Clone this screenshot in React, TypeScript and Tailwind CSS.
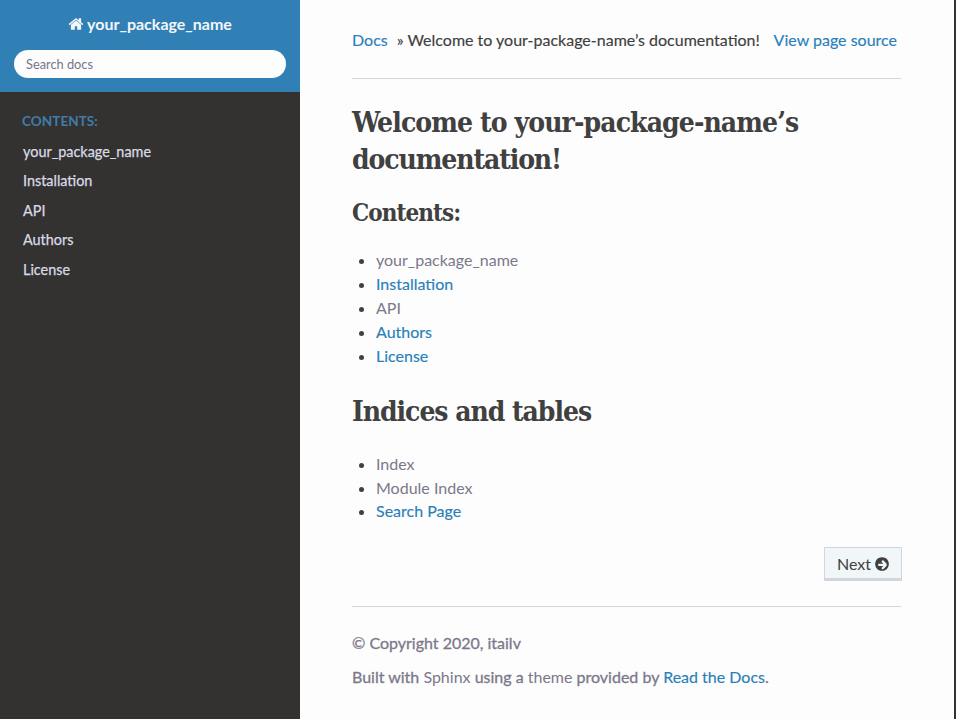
import type { ReactNode } from "react";

const LINK = "text-[#2980b9] [-webkit-text-stroke:0.15px]";
const VISITED = "text-[#7b788a] [-webkit-text-stroke:0px]";
const SLAB = "font-['Roboto_Slab','DejaVu_Serif_Condensed','DejaVu_Serif',serif] font-bold whitespace-nowrap ";

function HomeIcon() {
  return (
    <svg viewBox="0 0 1792 1792" className="h-4 w-4 fill-current" aria-hidden="true">
      <path d="M1472 992v480q0 26-19 45t-45 19h-384v-384h-256v384h-384q-26 0-45-19t-19-45v-480q0-1 .5-3t.5-3l575-474 575 474q1 2 1 6zm223-69l-62 74q-8 9-21 11h-3q-13 0-21-7l-692-577-692 577q-12 8-24 7-13-2-21-11l-62-74q-8-10-7-23.5t11-21.5l719-599q32-26 76-26t76 26l244 204v-195q0-14 9-23t23-9h192q14 0 23 9t9 23v408l219 182q10 8 11 21.5t-7 23.5z" />
    </svg>
  );
}

function ArrowCircleIcon() {
  return (
    <svg viewBox="0 0 1792 1792" className="h-4 w-4 fill-current" aria-hidden="true">
      <path d="M1413 896q0-27-18-45l-362-362q-18-18-45-18t-45 18l-91 91q-18 18-18 45t18 45l189 189h-502q-26 0-45 19t-19 45v128q0 26 19 45t45 19h502l-189 189q-19 19-19 45t19 45l91 91q18 18 45 18t45-18l362-362q18-18 18-45zm251 0q0 209-103 385.5t-279.5 279.5-385.5 103-385.5-103-279.5-279.5-103-385.5 103-385.5 279.5-279.5 385.5-103 385.5 103 279.5 279.5 103 385.5z" />
    </svg>
  );
}

function Item({ children, className }: { children: ReactNode; className: string }) {
  return (
    <li className="flex items-center leading-6">
      <span className="mt-[2px] mr-3 ml-[7px] h-[5px] w-[5px] rounded-full bg-[#404040]" />
      <a className={className}>{children}</a>
    </li>
  );
}

export default function App() {
  return (
    <div className="flex h-[719px] w-[956px] overflow-hidden bg-[#fdfdfd] font-['Lato',sans-serif] text-base text-[#404040]">
      <nav className="w-[300px] shrink-0 bg-[#343131]">
        <div className="h-[92px] bg-[#3080b5] px-[14px] pt-3">
          <a className="flex h-6 items-center justify-center gap-[3px] font-bold text-[#f4f5fa]">
            <HomeIcon />
            <span>your_package_name</span>
          </a>
          <input
            placeholder="Search docs"
            className="mt-[14px] block h-7 w-full rounded-full bg-[#fdfdfd] px-3 text-[12.8px] outline-none placeholder:text-[#757588]"
          />
        </div>
        <p className="mt-[13px] px-[22px] text-[13.6px] leading-8 font-bold text-[#3f7da8]">CONTENTS:</p>
        <ul className="-mt-[0.4px] px-[23px] text-[14.4px] leading-[29.5px] text-[#d8dae4] [-webkit-text-stroke:0.25px]">
          <li>your_package_name</li>
          <li>Installation</li>
          <li>API</li>
          <li>Authors</li>
          <li>License</li>
        </ul>
      </nav>
      <main className="flex-1 pr-[53px] pl-[52px]">
        <div className="flex h-[79px] border-b border-[#d5d5de] pt-7 leading-6 whitespace-nowrap">
          <a className={LINK}>Docs</a>
          <span className="ml-[9px] [-webkit-text-stroke:0.15px]">» Welcome to your-package-name’s documentation!</span>
          <a className={"ml-auto pr-1 " + LINK}>View page source</a>
        </div>
        <h1 className={SLAB + "mt-[25px] text-[28px] leading-[37px] tracking-[-0.9px]"}>
          Welcome to your-package-name’s
          <br />
          <span className="tracking-[-1.1px]">documentation!</span>
        </h1>
        <p className={SLAB + "mt-[19px] text-[24px] leading-8 tracking-[-0.95px]"}>Contents:</p>
        <ul className="mt-[19px]">
          <Item className={VISITED}>your_package_name</Item>
          <Item className={LINK}>Installation</Item>
          <Item className={VISITED}>API</Item>
          <Item className={LINK}>Authors</Item>
          <Item className={LINK}>License</Item>
        </ul>
        <h1 className={SLAB + "mt-[25px] text-[28px] leading-[37px] tracking-[-1.05px]"}>Indices and tables</h1>
        <ul className="mt-[22px]">
          <Item className={VISITED}>Index</Item>
          <Item className={VISITED}>Module Index</Item>
          <li className="-mt-px">
            <ul>
              <Item className={LINK}>Search Page</Item>
            </ul>
          </li>
        </ul>
        <div className="-mr-px mt-6 flex justify-end">
          <button className="flex h-[34px] w-[78px] items-center justify-center gap-[3px] rounded-[1px] border border-b-[3px] border-[#d3d5de] bg-[#f1f6f9] pt-[2px] pl-px">
            Next <ArrowCircleIcon />
          </button>
        </div>
        <div className="mt-[25px] border-t border-[#d5d5de] pt-6 leading-6 text-[#7b788a] [-webkit-text-stroke:0.3px]">
          <p>© Copyright 2020, itailv</p>
          <p className="mt-[10px]">
            Built with <a className={VISITED}>Sphinx</a> using a <a className={VISITED}>theme</a> provided by{" "}
            <a className={LINK}>Read the Docs</a>.
          </p>
        </div>
      </main>
      <div className="w-[2px] bg-[#343131]" />
    </div>
  );
}
